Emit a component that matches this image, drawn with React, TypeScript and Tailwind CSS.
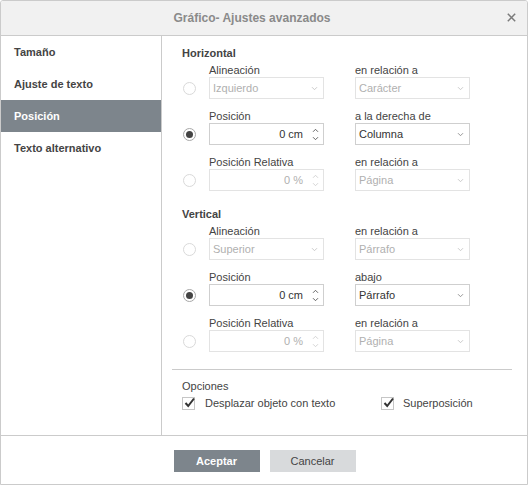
import React from "react";

// little drawings
const Chevron = ({ dim }: { dim?: boolean }) => (
  <svg width="7" height="5" viewBox="0 0 7 5" className="shrink-0">
    <path d="M1 1.2 L3.5 3.7 L6 1.2" fill="none" stroke={dim ? "#c4c4c4" : "#8a8a8a"} strokeWidth="0.9" />
  </svg>
);

const Spinner = ({ dim }: { dim?: boolean }) => (
  <div className="flex flex-col items-center gap-[3px] shrink-0">
    <svg width="7" height="5" viewBox="0 0 7 5">
      <path d="M1 3.8 L3.5 1.3 L6 3.8" fill="none" stroke={dim ? "#cfcfcf" : "#555"} strokeWidth="0.9" />
    </svg>
    <svg width="7" height="5" viewBox="0 0 7 5">
      <path d="M1 1.2 L3.5 3.7 L6 1.2" fill="none" stroke={dim ? "#cfcfcf" : "#555"} strokeWidth="0.9" />
    </svg>
  </div>
);

const Radio = ({ on }: { on?: boolean }) => (
  <div
    className={
      "w-[13px] h-[13px] rounded-full border bg-white flex items-center justify-center ml-px " +
      (on ? "border-[#a8a8a8]" : "border-[#d9d9d9]")
    }
  >
    {on && <div className="w-[7px] h-[7px] rounded-full bg-[#444]" />}
  </div>
);

const Check = () => (
  <div className="w-[13px] h-[13px] border border-[#c6c6c6] bg-white relative shrink-0">
    <svg width="14" height="13" viewBox="0 0 14 13" className="absolute left-[0px] top-[-2px]">
      <path d="M2.5 7 L5.2 10 L11 2.5" fill="none" stroke="#333" strokeWidth="2" />
    </svg>
  </div>
);

type Field = { label: string; value: string; kind: "select" | "spin"; dim?: boolean };

const Box = ({ f }: { f: Field }) => (
  <div className="w-[115px]">
    <div className="h-[14px] leading-[14px] text-[#444]">{f.label}</div>
    <div
      className={
        "h-[22px] border flex items-center bg-white " +
        (f.dim ? "border-[#e3e3e3] text-[#b0b0b0]" : "border-[#cfcfcf] text-[#333]")
      }
    >
      {f.kind === "select" ? (
        <>
          <span className="flex-1 pl-[3px]">{f.value}</span>
          <span className="pr-[5px]">
            <Chevron dim={f.dim} />
          </span>
        </>
      ) : (
        <>
          <span className="flex-1 text-right pr-[9px]">{f.value}</span>
          <span className="pr-[4px]">
            <Spinner dim={f.dim} />
          </span>
        </>
      )}
    </div>
  </div>
);

const Row = ({ on, left, right }: { on?: boolean; left: Field; right: Field }) => (
  <div className="flex">
    <div className="w-[27px] pt-[14px]">
      <div className="h-[22px] flex items-center">
        <Radio on={on} />
      </div>
    </div>
    <Box f={left} />
    <div className="ml-[31px]">
      <Box f={right} />
    </div>
  </div>
);

const Section = ({ title, rows }: { title: string; rows: { on?: boolean; left: Field; right: Field }[] }) => (
  <div>
    <div className="h-[14px] leading-[14px] font-bold text-[#444] mb-[3px]">{title}</div>
    <div className="flex flex-col gap-[10px]">
      {rows.map((r, i) => (
        <Row key={i} {...r} />
      ))}
    </div>
  </div>
);

const horizontal = [
  {
    left: { label: "Alineación", value: "Izquierdo", kind: "select" as const, dim: true },
    right: { label: "en relación a", value: "Carácter", kind: "select" as const, dim: true },
  },
  {
    on: true,
    left: { label: "Posición", value: "0 cm", kind: "spin" as const },
    right: { label: "a la derecha de", value: "Columna", kind: "select" as const },
  },
  {
    left: { label: "Posición Relativa", value: "0 %", kind: "spin" as const, dim: true },
    right: { label: "en relación a", value: "Página", kind: "select" as const, dim: true },
  },
];

const vertical = [
  {
    left: { label: "Alineación", value: "Superior", kind: "select" as const, dim: true },
    right: { label: "en relación a", value: "Párrafo", kind: "select" as const, dim: true },
  },
  {
    on: true,
    left: { label: "Posición", value: "0 cm", kind: "spin" as const },
    right: { label: "abajo", value: "Párrafo", kind: "select" as const },
  },
  {
    left: { label: "Posición Relativa", value: "0 %", kind: "spin" as const, dim: true },
    right: { label: "en relación a", value: "Página", kind: "select" as const, dim: true },
  },
];

const tabs = ["Tamaño", "Ajuste de texto", "Posición", "Texto alternativo"];

export default function App() {
  return (
    <div className="w-[528px] h-[485px] bg-white border border-[#cbcbcb] rounded-t-[3px] flex flex-col text-[11px] font-['Liberation_Sans',Arial,sans-serif] overflow-hidden">
      {/* HEADER */}
      <div className="h-[35px] shrink-0 bg-[#f1f1f1] border-b border-[#cbcbcb] relative flex items-center justify-center pr-[24px]">
        <span className="text-[12px] font-bold text-[#8a8a8a]">Gráfico- Ajustes avanzados</span>
        <svg width="9" height="9" viewBox="0 0 9 9" className="absolute right-[11px] top-[12px]">
          <path d="M0.8 0.8 L8.2 8.2 M8.2 0.8 L0.8 8.2" stroke="#7b7b7b" strokeWidth="1.5" />
        </svg>
      </div>

      {/* BODY */}
      <div className="flex h-[399px] shrink-0">
        <div className="w-[161px] shrink-0 border-r border-[#cbcbcb]">
          {tabs.map((t) => (
            <div
              key={t}
              className={
                "h-[32px] flex items-center pl-[13px] font-bold " +
                (t === "Posición" ? "bg-[#7d858c] text-white" : "text-[#444]")
              }
            >
              {t}
            </div>
          ))}
        </div>

        <div className="flex-1 pl-[20px] pt-[10px]">
          <Section title="Horizontal" rows={horizontal} />
          <div className="mt-[16px]">
            <Section title="Vertical" rows={vertical} />
          </div>
          <div className="mt-[17px] ml-[-10px] w-[340px] h-px bg-[#cbcbcb]" />
          <div className="mt-[9px] h-[14px] leading-[14px] text-[#444]">Opciones</div>
          <div className="mt-[2px] h-[16px] flex items-center text-[#444]">
            <div className="w-[199px] flex items-center">
              <Check />
              <span className="ml-[10px]">Desplazar objeto con texto</span>
            </div>
            <div className="flex items-center">
              <Check />
              <span className="ml-[9px]">Superposición</span>
            </div>
          </div>
        </div>
      </div>

      {/* FOOTER */}
      <div className="border-t border-[#cbcbcb] flex-1 flex justify-center gap-[10px] pt-[14px] pl-px">
        <button className="w-[86px] h-[22px] bg-[#7d858c] text-white font-bold">Aceptar</button>
        <button className="w-[86px] h-[22px] bg-[#d8dadc] text-[#444]">Cancelar</button>
      </div>
    </div>
  );
}
